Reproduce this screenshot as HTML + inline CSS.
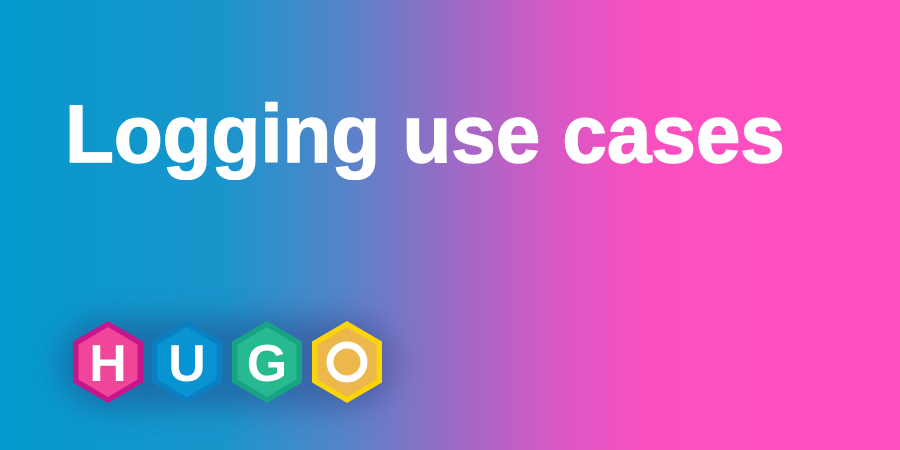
<!DOCTYPE html>
<html><head><style>
html,body{margin:0;padding:0}
body{width:900px;height:450px;overflow:hidden;position:relative;
background:linear-gradient(90deg,#049acd 0%,#1a95cc 25%,#5584c8 38%,#9a6bc6 50%,#d958c4 62%,#fb4fc1 72%,#ff4fc0 100%);}
h1{position:absolute;left:65px;top:85px;margin:0;font-family:"Liberation Sans",sans-serif;font-weight:bold;font-size:82px;line-height:100px;color:#fff;white-space:nowrap;transform:scaleX(0.975);transform-origin:0 0;-webkit-text-stroke:1.5px #fff}
.shadow{position:absolute;left:60px;top:318px;width:335px;height:90px;border-radius:45px;background:rgba(40,40,110,0.35);filter:blur(14px)}
svg{position:absolute;left:0;top:0}
</style></head><body>
<h1>Logging use cases</h1>
<div class="shadow"></div>
<svg width="900" height="450">
<defs>
<polygon id="hx" points="0,-41 35,-20.5 35,20.5 0,41 -35,20.5 -35,-20.5"/>
<polygon id="hi" points="0,-35 29.5,-17.5 29.5,17.5 0,35 -29.5,17.5 -29.5,-17.5"/>
</defs>
<g transform="translate(108,362)"><use href="#hx" fill="#c5178b"/><use href="#hi" fill="#f0469a"/>
<text x="0" y="19" text-anchor="middle" font-family="Liberation Sans,sans-serif" font-weight="bold" font-size="52" fill="#fff">H</text></g>
<g transform="translate(187,362)"><use href="#hx" fill="#0a7fc4"/><use href="#hi" fill="#0894d3"/>
<text x="0" y="19" text-anchor="middle" font-family="Liberation Sans,sans-serif" font-weight="bold" font-size="52" fill="#fff">U</text></g>
<g transform="translate(267,362)"><use href="#hx" fill="#17a384"/><use href="#hi" fill="#27b98f"/>
<text x="0" y="19" text-anchor="middle" font-family="Liberation Sans,sans-serif" font-weight="bold" font-size="52" fill="#fff">G</text></g>
<g transform="translate(347,362)"><use href="#hx" fill="#fbd40a"/><use href="#hi" fill="#ecb84c"/>
<circle cx="0" cy="0" r="17" fill="none" stroke="#fff" stroke-width="7"/></g>
</svg>
</body></html>
